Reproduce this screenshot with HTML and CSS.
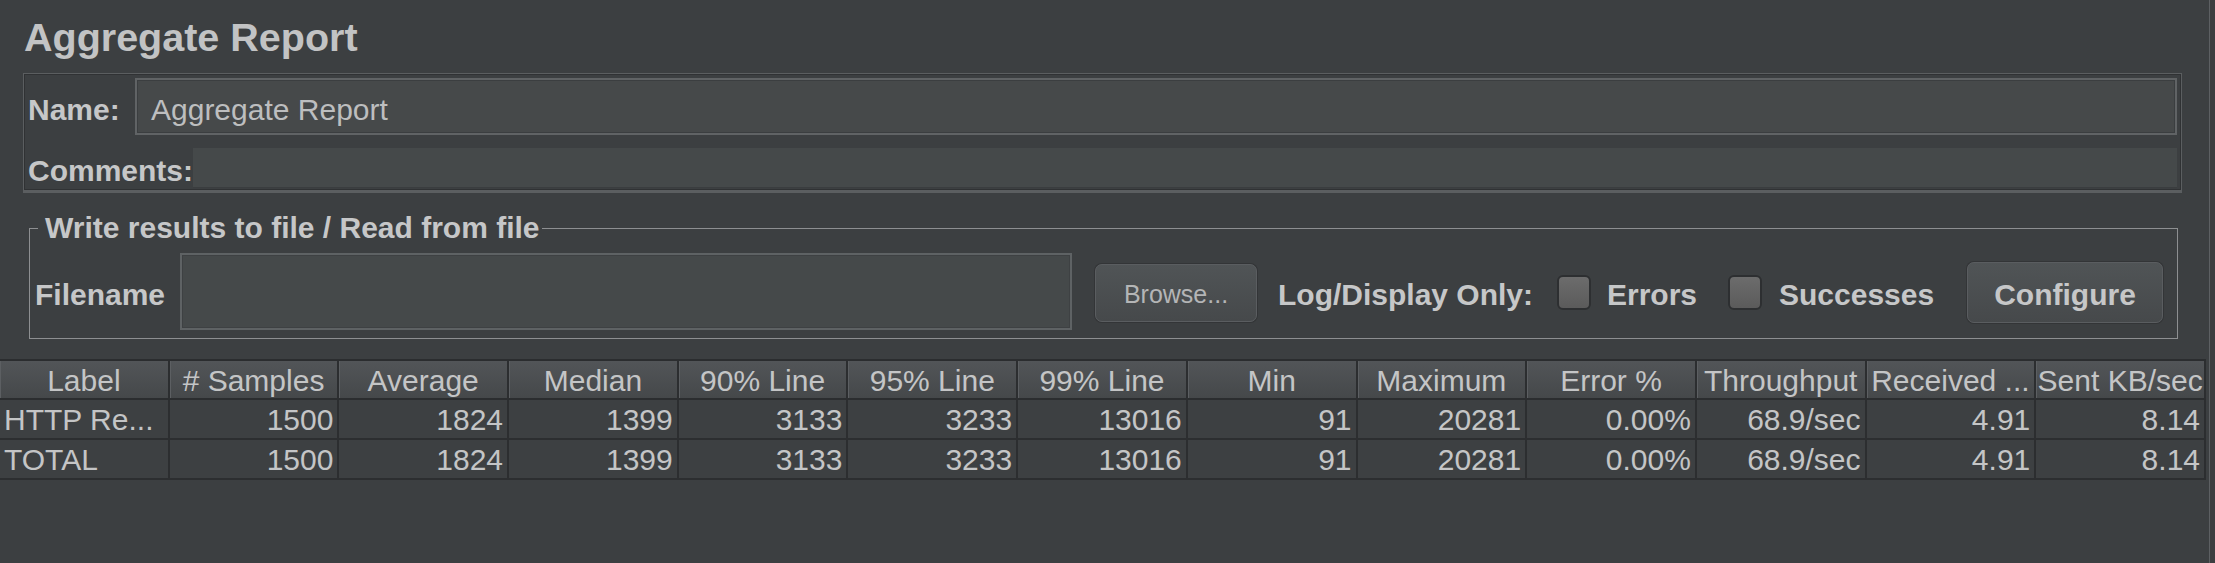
FILE: index.html
```html
<!DOCTYPE html>
<html lang="en">
<head>
<meta charset="utf-8">
<title>Aggregate Report</title>
<link rel="stylesheet" href="styles.css">
</head>
<body>
<div class="page">
  <h1 class="title">Aggregate Report</h1>

  <div class="name-panel">
    <div class="field-row">
      <span class="lbl lbl-name">Name:</span>
      <div class="name-field">Aggregate Report</div>
    </div>
    <div class="field-row comments-row">
      <span class="lbl lbl-comments">Comments:</span>
      <div class="text-area"></div>
    </div>
  </div>

  <fieldset class="file-box">
    <legend>Write results to file / Read from file</legend>
    <div class="file-row">
      <span class="lbl lbl-file">Filename</span>
      <div class="file-input"></div>
      <button class="btn browse">Browse...</button>
      <span class="lbl log-lbl">Log/Display Only:</span>
      <span class="check"></span>
      <span class="lbl chk-lbl errors-lbl">Errors</span>
      <span class="check"></span>
      <span class="lbl chk-lbl succ-lbl">Successes</span>
      <button class="btn configure">Configure</button>
    </div>
  </fieldset>

  <table class="report">
    <thead>
      <tr>
        <th>Label</th><th># Samples</th><th>Average</th><th>Median</th><th>90% Line</th><th>95% Line</th><th>99% Line</th><th>Min</th><th>Maximum</th><th>Error %</th><th>Throughput</th><th>Received ...</th><th>Sent KB/sec</th>
      </tr>
    </thead>
    <tbody>
      <tr>
        <td class="name">HTTP Re...</td><td>1500</td><td>1824</td><td>1399</td><td>3133</td><td>3233</td><td>13016</td><td>91</td><td>20281</td><td>0.00%</td><td>68.9/sec</td><td>4.91</td><td>8.14</td>
      </tr>
      <tr>
        <td class="name">TOTAL</td><td>1500</td><td>1824</td><td>1399</td><td>3133</td><td>3233</td><td>13016</td><td>91</td><td>20281</td><td>0.00%</td><td>68.9/sec</td><td>4.91</td><td>8.14</td>
      </tr>
    </tbody>
  </table>
</div>
</body>
</html>
```

FILE: styles.css
```css
html, body {
  margin: 0;
  padding: 0;
  background: #3c3f41;
}

body {
  font-family: "Liberation Sans", Arial, sans-serif;
  color: #c4c4c4;
}

.page {
  width: 2209px;
  height: 563px;
  overflow: hidden;
  border-right: 1px solid #5d6063;
}

.title {
  margin: 0 0 13px 0;
  padding: 14px 0 0 24px;
  font-size: 39.5px;
  line-height: 46px;
  font-weight: bold;
  color: #c2c3c4;
}

/* ---------- name / comments panel ---------- */
.name-panel {
  margin: 0 27px 0 23px;
  border: 1px solid #5b5e60;
  border-bottom: 3px solid #5b5e60;
  padding: 4px 4px 2px 4px;
  box-shadow: inset 0 0 0 1px #303234;
}

.field-row {
  display: flex;
  align-items: center;
}

.lbl {
  font-size: 30px;
  font-weight: bold;
  color: #c6c7c8;
  white-space: nowrap;
  flex: 0 0 auto;
}

.lbl-name {
  width: 107px;
  padding-top: 6px;
}

.lbl-comments {
  width: 165px;
  padding-top: 6px;
}

.name-field {
  flex: 1;
  height: 57px;
  box-sizing: border-box;
  border: 2px solid #606365;
  background: #46494a;
  box-shadow: inset 0 0 0 1px #3b3e40;
  padding: 6px 0 0 14px;
  font-size: 30px;
  color: #bdbebf;
  display: flex;
  align-items: center;
}

.comments-row {
  margin-top: 13px;
}

.text-area {
  flex: 1;
  height: 40px;
  background: #45494a;
  border-bottom: 1px solid #3a3d3f;
  box-sizing: border-box;
}

/* ---------- file fieldset ---------- */
.file-box {
  margin: 20px 31px 0 29px;
  border: 1px solid #8d8f91;
  padding: 10px 14px 8px 5px;
  min-width: 0;
}

.file-box legend {
  margin-left: 3px;
  padding: 0 2px 0 7px;
  font-size: 30px;
  line-height: 30px;
  font-weight: bold;
  color: #c6c7c8;
}

.file-row {
  display: flex;
  align-items: center;
  height: 77px;
}

.file-row .lbl {
  padding-top: 7px;
}

.lbl-file {
  width: 145px;
}

.file-input {
  flex: 0 0 892px;
  height: 77px;
  box-sizing: border-box;
  border: 2px solid #5e6264;
  background: #45494a;
  box-shadow: inset 0 0 0 1px #3e4143;
}

.btn {
  box-sizing: border-box;
  font-family: "Liberation Sans", Arial, sans-serif;
  border: 1px solid #5a5d60;
  border-radius: 7px;
  background: linear-gradient(#505456, #46494b);
  box-shadow: 0 0 0 1px #333537;
  padding: 0;
  flex: 0 0 auto;
}

.browse {
  margin-left: 23px;
  margin-top: 2px;
  width: 162px;
  height: 58px;
  padding-top: 3px;
  font-size: 25px;
  color: #b4b5b6;
}

.log-lbl {
  margin-left: 21px;
  width: 279px;
}

.check {
  flex: 0 0 auto;
  width: 34px;
  height: 35px;
  margin-top: 2px;
  box-sizing: border-box;
  border: 2px solid #2d2f31;
  border-radius: 6px;
  background: linear-gradient(#6c6c6c, #5b5b5b);
}

.chk-lbl {
  margin-left: 16px;
}

.errors-lbl {
  width: 121px;
}

.succ-lbl {
  margin-left: 17px;
  width: 187px;
}

.configure {
  margin-left: auto;
  margin-top: 2px;
  width: 196px;
  height: 61px;
  padding-top: 5px;
  font-size: 30px;
  font-weight: bold;
  color: #c6c7c8;
}

/* ---------- table ---------- */
.report {
  margin-top: 20px;
  width: 2206px;
  table-layout: fixed;
  border-collapse: separate;
  border-spacing: 0;
  border-top: 2px solid #2b2d2f;
  font-size: 30px;
  color: #c4c5c6;
}

.report th {
  font-weight: normal;
  line-height: 34px;
  padding: 3px 0 0 0;
  text-align: center;
  white-space: nowrap;
  overflow: hidden;
  background: linear-gradient(#525558, #45484a);
  border-right: 2px solid #2c2e30;
  border-bottom: 2px solid #2b2d2f;
  box-shadow: inset 1px 0 0 #5c5f62;
}

.report td {
  line-height: 36px;
  padding: 2px 4px 0 4px;
  text-align: right;
  white-space: nowrap;
  overflow: hidden;
  background: #3d4042;
  border-right: 2px solid #2c2e30;
  border-bottom: 2px solid #2c2e30;
}

.report td.name {
  text-align: left;
  padding-left: 4px;
}
```
